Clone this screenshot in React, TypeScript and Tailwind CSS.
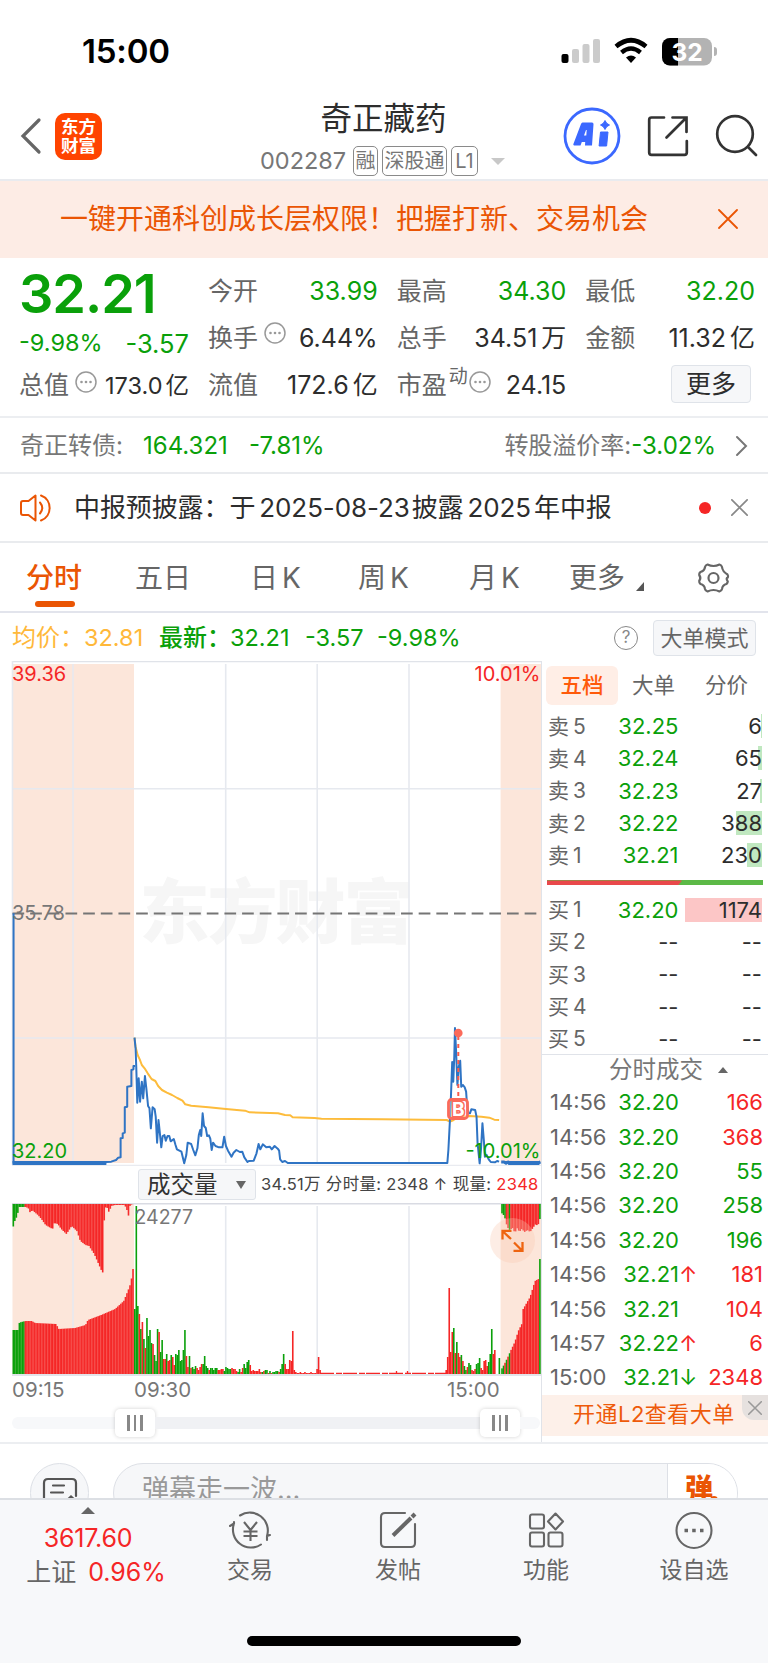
import type { ReactNode } from "react";

const GREEN = "#0aa00a";
const RED = "#f52626";

/* ---------- chart data ---------- */

const PRE_LINE =
  "39,40 39,789 300,789 306,786 320,785 334,780 340,773 347,772 347,715 353,714 353,700 359,698 359,622 366,620 366,560 378,558 378,510 384,508 384,498 389,498";

const DAY_LINE =
  "387,413 390,445 392,500 395,608 399,535 403,605 408,545 412,595 417,528 421,565 426,618 430,625 434,685 439,622 445,628 448,650 452,728 456,660 460,700 464,742 468,708 473,705 477,722 482,708 487,708 491,724 500,717 505,735 509,748 522,755 530,790 536,765 540,728 550,732 556,750 562,766 568,745 572,705 576,690 579,708 583,640 587,678 592,684 596,708 601,706 605,716 609,750 613,728 620,738 630,742 640,742 645,710 650,738 656,752 666,770 672,758 680,750 690,756 697,755 703,772 712,786 716,783 730,782 738,760 744,732 749,748 756,733 766,742 776,740 782,748 790,738 799,746 803,752 806,778 812,786 820,783 828,789 1000,789 1287,789 1290,750 1294,670 1297,600 1301,486 1304,545 1307,470 1309,384 1312,450 1316,555 1320,500 1324,482 1327,560 1332,555 1337,562 1341,575 1343,605 1347,640 1352,640 1356,628 1367,630 1371,650 1374,730 1380,790 1384,745 1388,670 1392,720 1395,770 1400,765 1406,778 1412,786 1424,787 1430,783 1436,785";

const POST_LINE = "1442,786 1450,786 1456,790 1462,786 1466,789 1540,789 1550,788 1555,786";

const AVG_LINE =
  "387,413 390,440 396,465 402,478 408,495 416,505 425,520 436,537 447,543 455,558 466,570 480,578 495,585 510,594 525,602 533,613 550,617 600,622 650,627 705,632 718,637 800,640 820,645 835,646 842,652 905,654 925,656 1100,658 1285,660 1295,665 1305,660 1318,652 1350,648 1385,650 1408,653 1422,659 1436,660";

type Knot = [number, number];

const PRE_VOLUME: Knot[] = [
  [36, 44], [51, 44], [54, 51], [60, 52], [73, 53], [90, 53], [100, 51], [160, 50], [168, 45],
  [215, 46], [245, 49], [252, 54], [290, 59], [330, 65], [355, 73], [370, 86], [376, 92], [380, 105],
];

const PRE_UNMATCHED: Knot[] = [
  [36, 24], [40, 18], [48, 12], [54, 3], [73, 3], [80, 4], [86, 9], [91, 6], [108, 11], [118, 15],
  [130, 21], [150, 25], [155, 19], [165, 20], [175, 25], [190, 30], [205, 22], [220, 27], [230, 37],
  [245, 41], [255, 42], [270, 50], [280, 58], [290, 66], [297, 70], [299, 3], [308, 4], [313, 9],
  [318, 2], [330, 1], [356, 1], [363, 4], [367, 12], [370, 11], [373, 1], [382, 0],
];

const POST_VOLUME: Knot[] = [
  [1442, 5], [1450, 10], [1460, 17], [1469, 24], [1480, 32], [1490, 43], [1500, 50], [1504, 65],
  [1524, 77], [1538, 93], [1548, 95], [1552, 115],
];

const POST_UNMATCHED: Knot[] = [
  [1442, 9], [1450, 12], [1458, 23], [1465, 26], [1474, 24], [1480, 29], [1487, 24], [1493, 28],
  [1500, 25], [1508, 28], [1516, 26], [1524, 28], [1530, 25], [1540, 20], [1546, 22], [1552, 15],
];

// one entry per minute: r = up, g = down, followed by the bar height
const OPENING =
  "g65 g168 g68 r60 g45 r52 g35 r26 g56 g38 g44 g31 r30 g19 g13 g45 r42 g22 g34 r15 r15 g20 r13 r14 g19 r17 r9 g20 g19 g24 g13 g14 g24 g44 r18 r7 g18 r6 g7 g5 g8 r6 r4 r7 r10 g10 g18 g8 g6 r4 g6 g6 g4 g6 g6 r4 r4 r5 r5 g3 g7 g6 g5 g5 r6 r5 r5 r3 g2 g5 r2 r6 g10 g6 g12 g14 r9 r3 r4 r3 r3 r3 r5 r2 g2 r3 g4 g4 r1 g3 r1 g2 g2 g3 g3 r2 g5 g10 g20 r10 r5 r5 r14 r13 r43 r4 r2 r1 r1 r2 r1 r1 r2 r1 r1 r1 r2 r1 r1 r1 r5 r17 r4 r1";

const CLOSING =
  "r4 r17 r86 r22 r42 g46 r21 g32 r21 r17 g19 r13 g8 g4 r7 g11 g9 r4 r3 r5 g10 g11 g16 r6 r4 r13 r14 r8 g12 g20 g45 r20 r24 g0 g0 g16";

function heightAt(knots: Knot[], x: number) {
  let current = knots[0][1];
  for (let i = 1; i < knots.length; i++) {
    const [x1, h1] = knots[i - 1];
    const [x2, h2] = knots[i];
    if (x >= x1 && x <= x2) return h1 + ((h2 - h1) * (x - x1)) / (x2 - x1);
    if (x > x2) current = h2;
  }
  return current;
}

/* ---------- small pieces ---------- */

function More() {
  return (
    <svg width="22" height="22" viewBox="0 0 22 22" fill="none" className="shrink-0">
      <circle cx="11" cy="11" r="10" stroke="#999" strokeWidth="1.5" />
      <circle cx="6.5" cy="11" r="1.3" fill="#999" />
      <circle cx="11" cy="11" r="1.3" fill="#999" />
      <circle cx="15.5" cy="11" r="1.3" fill="#999" />
    </svg>
  );
}

function Cross({ size, color, width = 1.8 }: { size: number; color: string; width?: number }) {
  return (
    <svg width={size} height={size} viewBox="0 0 20 20" fill="none">
      <path d="M1 1L19 19M19 1L1 19" stroke={color} strokeWidth={width} strokeLinecap="round" />
    </svg>
  );
}

function Tag({ children, className }: { children: ReactNode; className: string }) {
  return (
    <span
      className={`flex h-[30px] shrink-0 items-center justify-center rounded-[5px] border-[1.5px] border-[#8a8a8a] text-[20px] leading-none whitespace-nowrap ${className}`}
    >
      {children}
    </span>
  );
}

interface StatProps {
  label: ReactNode;
  value: string;
  unit?: string;
  green?: boolean;
}

function Stat({ label, value, unit, green }: StatProps) {
  return (
    <div className="flex h-[47px] items-center justify-between whitespace-nowrap">
      <span className="flex items-center text-[25px] text-[#666]">{label}</span>
      <span className={`text-[25px] ${green ? "text-[#0aa00a]" : "text-[#2d2d2d]"}`}>
        {value}
        {unit && <span className="ml-[4px]">{unit}</span>}
      </span>
    </div>
  );
}

/* ---------- sections ---------- */

function StatusBar() {
  return (
    <div className="flex h-[104px] items-center pr-[51px] pb-px pl-[82px]">
      <span className="text-[33px] leading-none font-semibold tracking-[-0.2px] text-black">15:00</span>
      <svg className="ml-auto" width="152" height="30" viewBox="0 0 152 30" fill="none">
        <rect x="0.5" y="17" width="7" height="9" rx="2" fill="#000" />
        <rect x="11" y="12" width="7" height="14" rx="2" fill="#cbcbcb" />
        <rect x="21.5" y="7" width="7" height="19" rx="2" fill="#cbcbcb" />
        <rect x="32" y="2" width="7" height="24" rx="2" fill="#cbcbcb" />
        <path d="M55 9.5Q70 -3 85 9.5" stroke="#000" strokeWidth="4.6" />
        <path d="M60.5 15.5Q70 7.5 79.5 15.5" stroke="#000" strokeWidth="4.4" />
        <path d="M65 20.6Q70 16.4 75 20.6L70 26Z" fill="#000" />
        <rect x="101" y="1" width="50" height="27.5" rx="8" fill="#b3b3b3" />
        <path d="M117 1h-8a8 8 0 0 0-8 8v11.500a8 8 0 0 0 8 8h8z" fill="#000" />
        <text x="126" y="23.500" textAnchor="middle" fontSize="24.500" fontWeight="700" fill="#fff">
          32
        </text>
      </svg>
      <span className="ml-[1.500px] h-[9px] w-[3px] rounded-r-full bg-[#b3b3b3]" />
    </div>
  );
}

function Header() {
  return (
    <header className="flex h-[77px] items-center border-b-2 border-[#e9ebef] pb-[11px]">
      <svg className="ml-5 shrink-0" width="22" height="38" viewBox="0 0 22 38" fill="none">
        <path d="M19 3L3 19L19 35" stroke="#666" strokeWidth="3.2" strokeLinecap="round" />
      </svg>
      <div className="ml-[13px] flex h-[47px] w-[47px] shrink-0 flex-col items-center justify-center rounded-[10px] bg-[#ff4400] text-[17.500px] leading-[19px] font-bold text-white">
        <span>东方</span>
        <span>财富</span>
      </div>
      <div className="ml-[158px] flex w-[245px] shrink-0 flex-col pt-[3px]">
        <h1 className="pl-[2px] text-center text-[31.500px] leading-[42px] text-[#2d2d2d]">奇正藏药</h1>
        <div className="mt-[5px] flex h-[32px] items-center whitespace-nowrap text-[#777]">
          <span className="w-[93px] text-[23.500px]">002287</span>
          <Tag className="w-[25px]">融</Tag>
          <Tag className="ml-[4px] w-[65px]">深股通</Tag>
          <Tag className="ml-[4px] w-[27px]">L1</Tag>
          <span className="ml-[13px] border-x-[7px] border-t-[7px] border-x-transparent border-t-[#c8c8c8]" />
        </div>
      </div>
      <svg className="ml-[58px] shrink-0" width="58" height="58" viewBox="0 0 58 58" fill="none">
        <circle cx="29" cy="29" r="27" stroke="#3b68ff" strokeWidth="2.8" />
        <path
          fillRule="evenodd"
          d="M19.500 15.500h9.500q1.600 0 1.500 1.800L29 38.500h-7l.2-3.500h-3.400l-1.300 3.500h-6.300q-1.300 0-.8-1.400l7.600-20.100q.5-1.500 1.500-1.500zM21 28.500h2.300l.4-5.500h-.7z"
          fill="#3b68ff"
        />
        <path d="M37.500 25h7.500l-1.400 14h-7.500z" fill="#3b68ff" stroke="#3b68ff" strokeWidth="1" strokeLinejoin="round" />
        <path d="M42 13.500l1.700 2.800 2.800 1.700-2.800 1.700L42 22.500l-1.700-2.800-2.800-1.700 2.800-1.700z" fill="#3b68ff" stroke="#3b68ff" />
      </svg>
      <svg className="ml-[26px] shrink-0" width="42" height="42" viewBox="0 0 42 42" fill="none">
        <path
          d="M17 2.500H4.500Q2.200 2.500 2.200 4.800V37.500Q2.200 39.800 4.500 39.800H37.500Q39.800 39.800 39.800 37.500V26M25.500 2.500H39.500V17M39 3L19.500 22.500"
          stroke="#333"
          strokeWidth="2.700"
          strokeLinecap="round"
        />
      </svg>
      <svg className="ml-[25px] shrink-0" width="44" height="44" viewBox="0 0 44 44" fill="none">
        <circle cx="21" cy="20" r="17.800" stroke="#333" strokeWidth="2.700" />
        <path d="M34 33L42 41" stroke="#333" strokeWidth="2.700" strokeLinecap="round" />
      </svg>
    </header>
  );
}

function Banner() {
  return (
    <div className="flex h-[77px] items-center justify-between bg-[#fdece5] pr-[30px] pb-px pl-[60px] text-[28px] text-[#ea5504]">
      <span className="whitespace-nowrap">一键开通科创成长层权限！把握打新、交易机会</span>
      <Cross size={20} color="#ea5504" />
    </div>
  );
}

function Quote() {
  return (
    <section className="flex h-[160px] border-b-2 border-[#eceef1] pt-[10px] pl-[19px]">
      <div className="w-[170px] shrink-0 whitespace-nowrap">
        <div className="-mt-[3px] h-[58px] text-[54px] leading-[58px] font-semibold tracking-[-1px] text-[#0aa00a]">32.21</div>
        <div className="mt-[5px] flex h-[30px] items-center justify-between text-[#0aa00a]">
          <span className="text-[23.500px]">-9.98%</span>
          <span className="pt-[2px] text-[25.500px]">-3.57</span>
        </div>
        <div className="mt-[4px] flex h-[47px] items-center">
          <span className="text-[25px] text-[#666]">总值</span>
          <span className="mb-2 ml-[6px]">
            <More />
          </span>
          <span className="ml-auto text-[23.500px] text-[#2d2d2d]">
            173.0<span className="ml-[3px]">亿</span>
          </span>
        </div>
      </div>
      <div className="ml-[19px] grid w-[547px] grid-cols-3 content-start gap-x-[19px]">
        <Stat label="今开" value="33.99" green />
        <Stat label="最高" value="34.30" green />
        <Stat label="最低" value="32.20" green />
        <Stat
          label={
            <>
              换手
              <span className="mb-3 ml-[6px]">
                <More />
              </span>
            </>
          }
          value="6.44%"
        />
        <Stat label="总手" value="34.51" unit="万" />
        <Stat label="金额" value="11.32" unit="亿" />
        <Stat label="流值" value="172.6" unit="亿" />
        <Stat
          label={
            <>
              市盈
              <span className="mb-4 ml-[2px] text-[19px]">动</span>
              <span className="mb-2 ml-[1px]">
                <More />
              </span>
            </>
          }
          value="24.15"
        />
        <div className="flex h-[44px] items-center justify-end pr-[4px]">
          <button className="h-[38px] w-[80px] rounded-[4px] border-[1.500px] border-[#dfe3e9] bg-[#f6f7f9] text-[25px] leading-none text-[#2d2d2d]">
            更多
          </button>
        </div>
      </div>
    </section>
  );
}

function BondRow() {
  return (
    <div className="flex h-[56px] items-center border-b-2 border-[#e9ebee] pt-px pr-[20px] pl-[20px] text-[24px] whitespace-nowrap text-[#777]">
      <span className="w-[123px]">奇正转债:</span>
      <span className="w-[106px] text-[#0aa00a]">164.321</span>
      <span className="text-[#0aa00a]">-7.81%</span>
      <span className="ml-auto">转股溢价率:</span>
      <span className="text-[#0aa00a]">-3.02%</span>
      <svg className="ml-[19px]" width="13" height="22" viewBox="0 0 13 22" fill="none">
        <path d="M2 2L11 11L2 20" stroke="#777" strokeWidth="2" strokeLinecap="round" />
      </svg>
    </div>
  );
}

function Notice() {
  return (
    <div className="flex h-[69px] items-center border-b-2 border-[#e9ebee] pr-[20px] pl-[19px]">
      <svg width="34" height="30" viewBox="0 0 34 30" fill="none" stroke="#ea5504" strokeWidth="2">
        <path d="M16.500 2.500v25L9.500 22H4Q2 22 2 20V10Q2 8 4 8h5.500z" strokeLinejoin="round" />
        <path d="M21 9.500q4.500 5.500 0 11M22 2.500c11.500 4 11.500 21 0 25" strokeLinecap="round" />
      </svg>
      <span className="ml-[21px] text-[26px] tracking-[-0.100px] whitespace-nowrap text-[#2d2d2d]">
        中报预披露：于<span className="ml-[4px]">2025-08-23</span>
        <span className="ml-[2px]">披露</span>
        <span className="ml-[4px]">2025</span>
        <span className="ml-[3px]">年中报</span>
      </span>
      <span className="ml-auto h-3 w-3 rounded-full bg-[#f52626]" />
      <span className="ml-[20px]">
        <Cross size={17} color="#888" width={2} />
      </span>
    </div>
  );
}

const periods = [
  { name: "五日", width: "w-[115px]" },
  { name: "日 K", width: "w-[108px]" },
  { name: "周 K", width: "w-[111px]" },
  { name: "月 K", width: "w-[100px]" },
];

function PeriodTabs() {
  return (
    <nav className="flex h-[70px] items-center border-b-2 border-[#e2e4ec] pt-px pl-[26px] text-[28px] text-[#666]">
      <div className="relative w-[109px] font-medium text-[#ea5504]">
        分时
        <span className="absolute top-[44px] left-[9px] h-[6px] w-[40px] rounded-full bg-[#ea5504]" />
      </div>
      {periods.map((p) => (
        <div key={p.name} className={`[word-spacing:-4px] ${p.width}`}>
          {p.name}
        </div>
      ))}
      <div className="flex items-end">
        更多
        <span className="mb-[8px] ml-[11px] border-b-[9px] border-l-[8px] border-b-[#555] border-l-transparent" />
      </div>
      <svg className="ml-[53px]" width="33" height="32" viewBox="0 0 33 32" fill="none" stroke="#666" strokeWidth="2.200">
        <path
          strokeLinejoin="round"
          d="M10.500 2.500Q16.500 5.500 22.500 2.500Q24.500 3 25 5Q25.500 9.500 30.500 12.500Q31.500 14 30.800 15.500Q28.500 16 30.800 19.500Q30.500 21 29.500 22Q25.500 23 25 27Q24.500 29 22.500 29.500Q16.500 26.500 10.500 29.500Q8.500 29 8 27Q7.500 23 3.500 22Q2 20.500 2.200 19Q4.500 16 2.200 13Q2 11 3.500 10Q7.500 9 8 5Q8.500 3 10.500 2.500Z"
        />
        <circle cx="16.500" cy="16" r="5" />
      </svg>
    </nav>
  );
}

function AverageRow() {
  return (
    <div className="flex h-[48px] items-center pt-px pr-[12px] pl-[12px] text-[24px] whitespace-nowrap text-[#0aa00a]">
      <span className="w-[72px] text-[#ffb83a]">均价：</span>
      <span className="w-[75px] text-[23.500px] text-[#ffb83a]">32.81</span>
      <span className="w-[71px] font-medium">最新：</span>
      <span className="w-[75px] text-[23.500px]">32.21</span>
      <span className="w-[72px] text-[23.500px]">-3.57</span>
      <span className="text-[23.500px]">-9.98%</span>
      <span className="ml-auto flex h-6 w-6 items-center justify-center rounded-full border-[1.500px] border-[#888] text-[17px] leading-none text-[#888]">
        ?
      </span>
      <button className="ml-[15px] h-[36px] w-[103px] rounded-[4px] border-[1.500px] border-[#dfe3e9] bg-[#f6f7f9] text-[22px] leading-none text-[#666]">
        大单模式
      </button>
    </div>
  );
}

function PriceChart() {
  return (
    <svg className="block" width="541" height="505" viewBox="0 0 541 505" fill="none" fontSize="20">
      <rect x="12.500" y="3" width="121.500" height="499" fill="#fce6da" />
      <rect x="500.600" y="3" width="41" height="499" fill="#fce6da" />
      <text x="276.500" y="277" textAnchor="middle" fontSize="70" fontWeight="900" fill="#f6f6f6" textLength="274">
        东方财富
      </text>
      <path d="M12 0.600H541" stroke="#e0e3e9" strokeWidth="1.300" />
      <path d="M12.500 0V504M73 3V502M225.700 3V502M317.200 3V502M409 3V502M12.500 127.700H541M12.500 377H541" stroke="#e6e9ef" strokeWidth="1.600" />
      <path d="M12 504.300H541" stroke="#e9ebf0" strokeWidth="1.200" />
      <path d="M12.500 252.500H541" stroke="#757575" strokeWidth="2" strokeDasharray="11.700 5.960" />
      <g transform="translate(0 239) scale(0.34758 0.33333)" strokeLinejoin="round">
        <polyline points={AVG_LINE} stroke="#fdbc3c" strokeWidth="2" vectorEffect="non-scaling-stroke" />
        <polyline points={PRE_LINE} stroke="#2f74c4" strokeWidth="2" vectorEffect="non-scaling-stroke" />
        <polyline points={DAY_LINE} stroke="#2f74c4" strokeWidth="2" vectorEffect="non-scaling-stroke" />
        <polyline points={POST_LINE} stroke="#2f74c4" strokeWidth="3" vectorEffect="non-scaling-stroke" />
        <path d="M36 789H306" stroke="#2f74c4" strokeWidth="4" vectorEffect="non-scaling-stroke" />
        <path d="M1462 789H1552" stroke="#2f74c4" strokeWidth="4" vectorEffect="non-scaling-stroke" />
      </g>
      <text x="12" y="20" fill={RED}>39.36</text>
      <text x="540.500" y="20" textAnchor="end" fill={RED}>10.01%</text>
      <text x="12" y="258.500" fill="#777">35.78</text>
      <text x="12" y="496.500" fill={GREEN}>32.20</text>
      <text x="540.500" y="496.500" textAnchor="end" fill={GREEN}>-10.01%</text>
      <path d="M458.300 375V438" stroke="#fb5b4b" strokeWidth="2" strokeDasharray="4 4" />
      <circle cx="458.300" cy="372" r="4.300" fill="#fb6a5a" />
      <rect x="448.500" y="438.500" width="19" height="19" rx="3" fill="#fff" fillOpacity="0.350" stroke="#fb6a5a" strokeWidth="2.800" />
      <text x="458.200" y="455" textAnchor="middle" fontSize="19" fontWeight="700" fill="#fff" stroke="#fb6a5a" strokeWidth="3" paintOrder="stroke">
        B
      </text>
    </svg>
  );
}

function VolumeHeader() {
  return (
    <div className="flex h-[37px] items-center pl-[138px] whitespace-nowrap">
      <button className="flex h-[31px] w-[118px] items-center justify-between rounded-[3px] border-[1.500px] border-[#dfe3e9] bg-[#f6f7f9] pr-[9px] pl-[8px] text-[23.500px] leading-none text-[#333]">
        成交量
        <span className="border-x-[5px] border-t-[8px] border-x-transparent border-t-[#666]" />
      </button>
      <span className="ml-[5px] text-[16.500px] tracking-[0.310px] text-[#444]">
        34.51万 分时量: 2348 ↑ 现量: <span className="text-[#f52626]">2348</span>
      </span>
    </div>
  );
}

const AUCTION_STEP = 4.36;
const MINUTE_STEP = 1.519;

function AuctionBars({ from, to, base, unmatched }: { from: number; to: number; base: Knot[]; unmatched: Knot[] }) {
  const count = Math.round((to - from) / AUCTION_STEP);
  const isPre = from < 100;
  return (
    <g>
      {Array.from({ length: count }, (_, i) => {
        const raw = from + i * AUCTION_STEP;
        const x = raw / 2.877;
        const low = heightAt(base, raw + 1);
        const high = heightAt(unmatched, raw + 1);
        const last = !isPre && i === count - 1;
        const lowGreen = isPre ? i < 8 : last || i === 0 || i === 1 || i === 3 || i === 5;
        const highGreen = isPre ? i < 8 : last || i < 3 || i === 5;
        return (
          <g key={i}>
            <rect x={x} y={171 - low} width="1.600" height={low} fill={lowGreen ? GREEN : RED} />
            <rect x={x} y="1" width="1.600" height={high} fill={highGreen ? GREEN : RED} />
            {!lowGreen && <rect x={x + 1.1} y={171 - low} width="0.400" height={low} fill="#fff" fillOpacity="0.120" />}
            {!highGreen && <rect x={x + 1.1} y="1" width="0.400" height={high} fill="#fff" fillOpacity="0.120" />}
          </g>
        );
      })}
    </g>
  );
}

function MinuteBars({ series, start }: { series: string; start: number }) {
  return (
    <g>
      {series.split(" ").map((bar, i) => {
        const h = Number(bar.slice(1));
        const x = 134 + (start + i) * MINUTE_STEP;
        return <rect key={i} x={x} y={171 - h} width="1.600" height={h} fill={bar[0] === "g" ? GREEN : RED} />;
      })}
    </g>
  );
}

function VolumeChart() {
  return (
    <svg className="block" width="541" height="173" viewBox="0 0 541 173" fill="none">
      <rect x="12.500" y="1" width="121.500" height="170" fill="#fce6da" />
      <rect x="500.600" y="1" width="41" height="170" fill="#fce6da" />
      <path d="M73 1V171M225.700 3V171M317.200 3V171M409 3V171" stroke="#e6e9ef" strokeWidth="1.600" />
      <path d="M12 0.800H541M12 171.900H541" stroke="#d9dbe3" strokeWidth="1.500" />
      <AuctionBars from={36} to={383} base={PRE_VOLUME} unmatched={PRE_UNMATCHED} />
      <AuctionBars from={1442} to={1556} base={POST_VOLUME} unmatched={POST_UNMATCHED} />
      <MinuteBars series={OPENING} start={0} />
      <path d="M320 170.400H446" stroke={RED} strokeWidth="1.200" strokeDasharray="14 2 6 1" />
      <path d="M396.500 168V171M407.500 168V171" stroke={RED} strokeWidth="1.300" />
      <MinuteBars series={CLOSING} start={205} />
      <text x="134.500" y="21" fontSize="19.500" fill="#777">24277</text>
      <circle cx="512.500" cy="37.500" r="22.500" fill="#f9c6ad" fillOpacity="0.320" />
      <path
        d="M511 36L502.500 28M502.500 36.500V27.800H511.500M514 39.500L522 47.500M522.500 39V47.800H513.500"
        stroke="#ee6410"
        strokeWidth="2.300"
      />
    </svg>
  );
}

function Handle() {
  return (
    <span className="flex h-[28px] w-[40px] items-center justify-center gap-[4px] rounded-[5px] bg-white shadow-[0_0_4px_rgba(0,0,0,0.18)]">
      <i className="h-[16px] w-[2.500px] bg-[#888]" />
      <i className="h-[16px] w-[2.500px] bg-[#888]" />
      <i className="h-[16px] w-[2.500px] bg-[#888]" />
    </span>
  );
}

function RangeSlider() {
  return (
    <div className="flex h-[36px] items-center pl-[12px]">
      <span className="h-[12px] w-[103px] rounded-l-full bg-[#f7f8fa]" />
      <Handle />
      <span className="h-[12px] w-[325px] bg-[#f0f1f4]" />
      <Handle />
      <span className="h-[12px] w-[20px] rounded-r-full bg-[#f7f8fa]" />
    </div>
  );
}

const asks = [
  { label: "卖 5", price: "32.25", qty: "6", fill: 1 },
  { label: "卖 4", price: "32.24", qty: "65", fill: 4 },
  { label: "卖 3", price: "32.23", qty: "27", fill: 2 },
  { label: "卖 2", price: "32.22", qty: "388", fill: 26 },
  { label: "卖 1", price: "32.21", qty: "230", fill: 15 },
];

const bids = [
  { label: "买 1", price: "32.20", qty: "1174", fill: 77 },
  { label: "买 2", price: "--", qty: "--", fill: 0 },
  { label: "买 3", price: "--", qty: "--", fill: 0 },
  { label: "买 4", price: "--", qty: "--", fill: 0 },
  { label: "买 5", price: "--", qty: "--", fill: 0 },
];

const trades = [
  { time: "14:56", price: "32.20", dir: "", qty: "166", up: true },
  { time: "14:56", price: "32.20", dir: "", qty: "368", up: true },
  { time: "14:56", price: "32.20", dir: "", qty: "55", up: false },
  { time: "14:56", price: "32.20", dir: "", qty: "258", up: false },
  { time: "14:56", price: "32.20", dir: "", qty: "196", up: false },
  { time: "14:56", price: "32.21", dir: "↑", qty: "181", up: true },
  { time: "14:56", price: "32.21", dir: "", qty: "104", up: true },
  { time: "14:57", price: "32.22", dir: "↑", qty: "6", up: true },
  { time: "15:00", price: "32.21", dir: "↓", qty: "2348", up: true },
];

function Level({ row, side }: { row: (typeof asks)[number]; side: "ask" | "bid" }) {
  const empty = row.price === "--";
  return (
    <div className="flex h-[32.300px] items-center pr-[6px] pl-[6px] text-[22px] leading-none whitespace-nowrap">
      <span className="w-[50px] text-[21px] [word-spacing:-2px] text-[#666]">{row.label}</span>
      <span className={`w-[80.500px] text-right ${empty ? "text-[#333]" : "text-[#0aa00a]"}`}>{row.price}</span>
      <span className="relative flex h-[24px] flex-1 items-center justify-end text-[#2d2d2d]">
        <span
          className={`absolute inset-y-0 right-0 ${side === "ask" ? "bg-[#c0e8c0]" : "bg-[#fcc6c6]"}`}
          style={{ width: row.fill }}
        />
        <span className="relative">{row.qty}</span>
      </span>
    </div>
  );
}

function OrderBook() {
  return (
    <aside className="flex w-[227px] flex-col border-l-[1.500px] border-[#e0e3e9]">
      <div className="flex h-[49px] items-center pl-[4px] text-[21.500px] leading-none text-[#666]">
        <span className="flex h-[39px] w-[72px] items-center justify-center rounded-[6px] bg-[#ffeee6] font-medium text-[#ff5a0a]">
          五档
        </span>
        <span className="ml-[14px]">大单</span>
        <span className="ml-[30px]">分价</span>
      </div>
      {asks.map((row) => (
        <Level key={row.label} row={row} side="ask" />
      ))}
      <div className="mt-[9px] mb-[8px] ml-[5px] flex h-[5px] w-[216px] shrink-0 bg-[#5cb947]">
        <span className="w-[135px] bg-[#e9484b] [clip-path:polygon(0_0,100%_0,97%_100%,0_100%)]" />
      </div>
      {bids.map((row) => (
        <Level key={row.label} row={row} side="bid" />
      ))}
      <div className="-mt-px flex h-[31px] items-center border-t-[1.500px] border-[#e0e3e9] pl-[67px] text-[23.500px] text-[#777]">
        分时成交
        <span className="ml-[15px] border-x-[5px] border-b-[6px] border-x-transparent border-b-[#666]" />
      </div>
      {trades.map((t, i) => (
        <div key={i} className="flex h-[34.400px] items-center pr-[5px] pl-[8px] text-[22px] leading-none whitespace-nowrap">
          <span className="w-[64px] text-[#666]">{t.time}</span>
          <span className="w-[65px] text-right text-[#0aa00a]">{t.price}</span>
          <span className={`w-[16px] text-[22px] ${t.dir === "↑" ? "text-[#f52626]" : "text-[#0aa00a]"}`}>{t.dir}</span>
          <span className={`flex-1 text-right ${t.up ? "text-[#f52626]" : "text-[#0aa00a]"}`}>{t.qty}</span>
        </div>
      ))}
      <div className="mt-px flex h-[41px] shrink-0 items-start justify-between bg-[#fdf0e9] pl-[31px] text-[22px] leading-[38px] tracking-[0.500px] whitespace-nowrap text-[#ee5a0a]">
        开通L2查看大单
        <span className="flex h-[25px] w-[26px] items-center justify-center rounded-bl-[12px] bg-[#e6e1df]">
          <Cross size={14} color="#999" width={2.2} />
        </span>
      </div>
    </aside>
  );
}

function CommentBar() {
  return (
    <div className="h-[56px] overflow-hidden border-t-2 border-[#eceef1] bg-white">
      <div className="mt-[19px] flex h-[60px] pr-[30px] pl-[30px]">
        <div className="flex w-[59px] justify-center rounded-full border-[1.500px] border-[#dde0e6] bg-[#f6f7f9] pt-[13px]">
          <svg width="36" height="34" viewBox="0 0 36 34" fill="none" stroke="#555" strokeWidth="2.200">
            <path d="M2 32V6Q2 2 6 2H30Q34 2 34 6V19M11 8.500H22M9 15.500H21" strokeLinecap="round" />
            <path d="M22 26L29 19.500L36 26" />
          </svg>
        </div>
        <div className="ml-[24px] flex flex-1 overflow-hidden rounded-full border-[1.500px] border-[#dde0e6] bg-[#f6f7f9]">
          <span className="flex-1 pl-[28px] text-[27px] leading-[51px] text-[#999]">弹幕走一波...</span>
          <span className="relative w-[70px] border-l-[1.500px] border-[#dde0e6] bg-white pl-[17px] text-[28px] leading-[50px] font-black text-[#ea5504]">
            弹
            <i className="absolute top-[32px] left-[42px] h-[8px] w-[8px] rounded-full bg-[#ea5504]" />
          </span>
        </div>
      </div>
    </div>
  );
}

function TabItem({ label, children }: { label: string; children: ReactNode }) {
  return (
    <div className="flex w-[148px] flex-col items-center pt-[10px]">
      <svg width="44" height="40" viewBox="0 0 44 40" fill="none" stroke="#666" strokeWidth="2.100">
        {children}
      </svg>
      <span className="mt-[5px] text-[23px] leading-[30px] text-[#666]">{label}</span>
    </div>
  );
}

function BottomBar() {
  return (
    <footer className="h-[166px] border-t-2 border-[#dcdfe4] bg-[#f7f8fa]">
      <div className="flex h-[136px]">
        <div className="flex w-[176px] flex-col items-center pt-[7px] whitespace-nowrap">
          <span className="border-x-[7px] border-b-[7px] border-x-transparent border-b-[#666]" />
          <span className="mt-[8px] text-[25px] leading-[32px] tracking-[-0.200px] text-[#f52626]">3617.60</span>
          <span className="mt-[2px] pl-4 text-[25px] leading-[32px] text-[#666]">
            上证
            <span className="ml-[12px] text-[#f52626]">0.96%</span>
          </span>
        </div>
        <TabItem label="交易">
          <path d="M12 5.500A18 18 0 0 1 39 26M39 26L42 25M39 26V30" strokeLinecap="round" />
          <path d="M33 34.500A18 18 0 0 1 6 13.500M6 13.500L2 16M6 13.500V12" strokeLinecap="round" />
          <path d="M16 12L22.500 20L29 12M22.500 20V31M15.500 21.500H29.500M15.500 26H29.500" />
        </TabItem>
        <TabItem label="发帖">
          <path d="M29 3H9Q5 3 5 7V33Q5 37 9 37H35Q39 37 39 33V14" strokeLinecap="round" />
          <path d="M17 25.500L35 8" strokeWidth="4" />
          <path d="M36 7L39 4" strokeWidth="4" />
        </TabItem>
        <TabItem label="功能">
          <rect x="6" y="4.500" width="14" height="14" rx="2" />
          <rect x="6" y="22.500" width="14" height="14" rx="2" />
          <rect x="24.500" y="22.500" width="14" height="14" rx="2" />
          <path d="M31.500 3.500L39 11.500L31.500 19.500L24 11.500Z" strokeLinejoin="round" />
        </TabItem>
        <TabItem label="设自选">
          <circle cx="22" cy="20.500" r="17.500" />
          <path d="M12.500 20.500h3.500M20.200 20.500h3.500M28 20.500h3.500" strokeWidth="3.500" />
        </TabItem>
      </div>
      <div className="mx-auto h-[10px] w-[274px] rounded-full bg-black" />
    </footer>
  );
}

export default function App() {
  return (
    <div className="h-[1663px] w-[768px] overflow-hidden bg-white font-[Inter,'Noto_Sans_CJK_SC',sans-serif]">
      <StatusBar />
      <Header />
      <Banner />
      <Quote />
      <BondRow />
      <Notice />
      <PeriodTabs />
      <AverageRow />
      <div className="flex h-[781px]">
        <div className="w-[541px] shrink-0">
          <PriceChart />
          <VolumeHeader />
          <VolumeChart />
          <div className="flex h-[29px] items-center pl-[12px] text-[20.500px] leading-none text-[#777]">
            <span className="w-[122px]">09:15</span>
            <span className="w-[313px]">09:30</span>
            <span>15:00</span>
          </div>
          <RangeSlider />
        </div>
        <OrderBook />
      </div>
      <CommentBar />
      <BottomBar />
    </div>
  );
}
